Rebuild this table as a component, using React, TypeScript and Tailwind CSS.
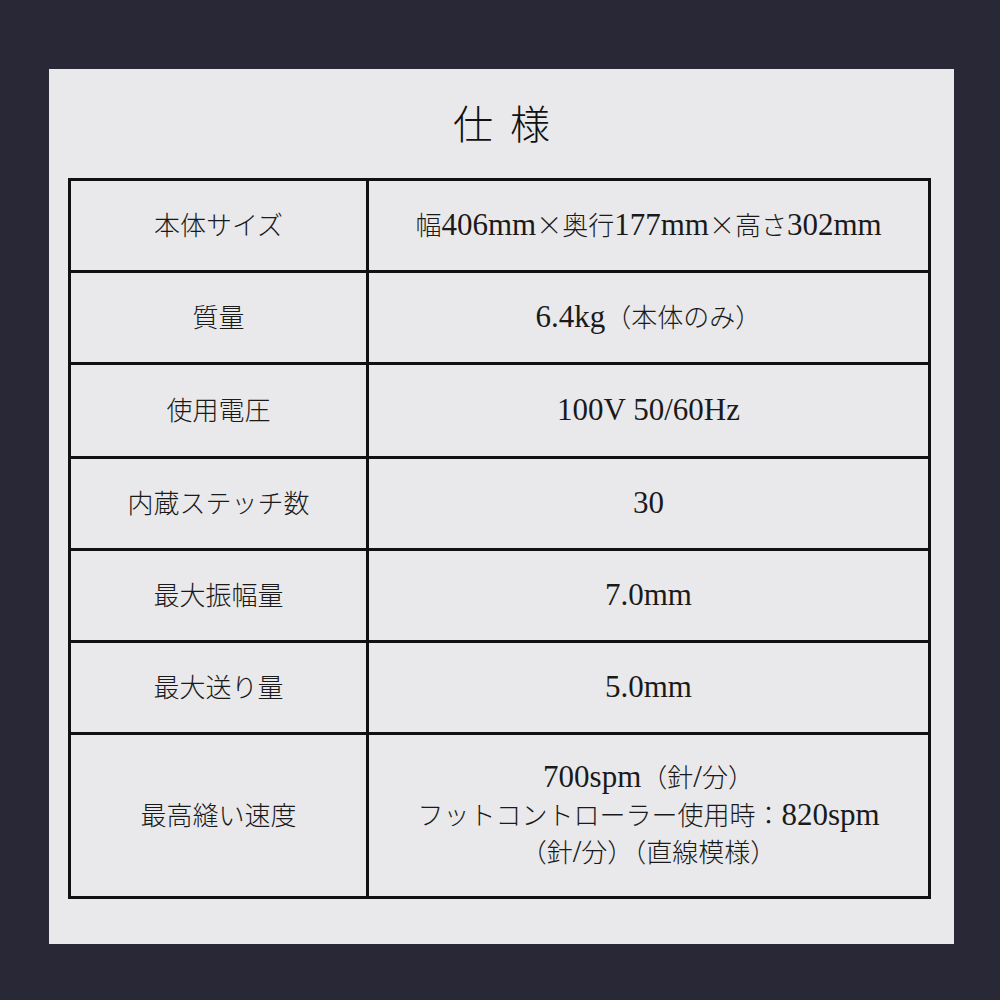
import React from "react";

function Mixed({ text }: { text: string }) {
  const parts = text.match(/[\x00-\x7F]+|[^\x00-\x7F]+/g) || [];
  return (
    <>
      {parts.map((p, i) =>
        /^[\x00-\x7F]+$/.test(p) ? (
          <span key={i} className="text-[31px] leading-none font-normal [font-family:'Liberation_Serif',serif]">
            {p}
          </span>
        ) : (
          <span key={i} className="text-[26px] leading-none font-light [font-family:'Noto_Sans_CJK_JP',sans-serif]">
            {p}
          </span>
        )
      )}
    </>
  );
}

const rows: { label: string; value: string[]; h: string }[] = [
  { label: "本体サイズ", value: ["幅406mm×奥行177mm×高さ302mm"], h: "h-[92px]" },
  { label: "質量", value: ["6.4kg（本体のみ）"], h: "h-[92px]" },
  { label: "使用電圧", value: ["100V 50/60Hz"], h: "h-[94px]" },
  { label: "内蔵ステッチ数", value: ["30"], h: "h-[92px]" },
  { label: "最大振幅量", value: ["7.0mm"], h: "h-[92px]" },
  { label: "最大送り量", value: ["5.0mm"], h: "h-[92px]" },
  {
    label: "最高縫い速度",
    value: ["700spm（針/分）", "フットコントローラー使用時：820spm", "（針/分）（直線模様）"],
    h: "h-[161px]",
  },
];

export default function App() {
  return (
    <div className="w-[1000px] h-[1000px] bg-[#292836] pt-[69px] pl-[49px]">
      <div className="w-[905px] h-[875px] bg-[#e9e9eb] pt-[31px]">
        <div className="h-[44px] flex items-center justify-center text-[40px] leading-[44px] text-[#111] [font-family:'Noto_Sans_CJK_JP',sans-serif] font-light tracking-[4px] pl-[4px]">
          仕 様
        </div>
        <div className="mt-[34px] ml-[19px] w-[863px] border-[3px] border-[#111] flex flex-col text-[#1a1a1a]">
          {rows.map((r, i) => (
            <div
              key={i}
              className={`flex ${r.h} ${i < rows.length - 1 ? "border-b-[3px] border-[#111]" : ""}`}
            >
              <div className="w-[298px] border-r-[3px] border-[#111] flex items-center justify-center text-[28px] leading-[37.5px] [font-family:'Liberation_Serif',serif]">
                <div className="whitespace-nowrap">
                  <Mixed text={r.label} />
                </div>
              </div>
              <div className="flex-1 flex flex-col items-center justify-center text-[28px] leading-[37.5px] [font-family:'Liberation_Serif',serif]">
                {r.value.map((v, j) => (
                  <div key={j} className="whitespace-nowrap">
                    <Mixed text={v} />
                  </div>
                ))}
              </div>
            </div>
          ))}
        </div>
      </div>
    </div>
  );
}
